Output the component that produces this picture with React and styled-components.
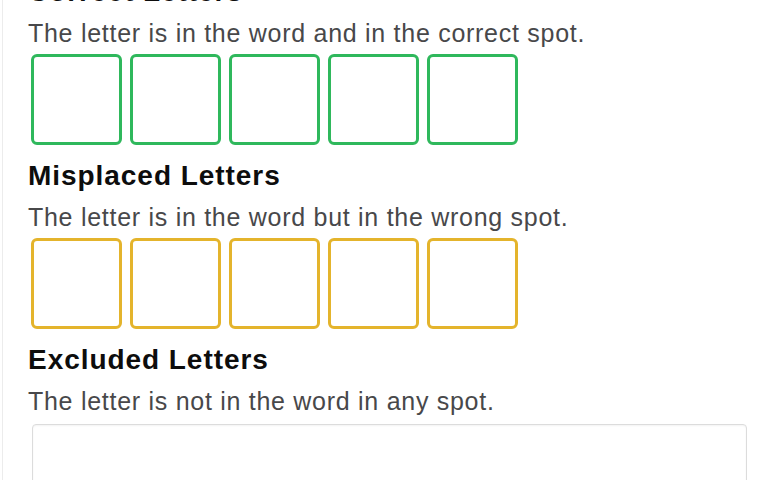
import React from "react";
import styled, { createGlobalStyle } from "styled-components";

const Global = createGlobalStyle`
  html, body { margin: 0; padding: 0; background: #ffffff; overflow: hidden; }
  body { font-family: "Liberation Sans", Arial, sans-serif; }
`;

const Page = styled.div`
  margin-top: -24px;
  margin-left: 2px;
  border-left: 1px solid #ececec;
  padding-left: 25px;
  min-height: 520px;
`;

const Section = styled.section`
  display: flex;
  flex-direction: column;
  margin-bottom: 15px;
`;

const Heading = styled.h2`
  margin: 0;
  font-size: 28px;
  line-height: 32px;
  font-weight: 700;
  letter-spacing: 0.95px;
  color: #0d0d0d;
`;

const Description = styled.p`
  margin: 10px 0 0;
  font-size: 25px;
  line-height: 30px;
  letter-spacing: 0.72px;
  color: #48484a;
`;

const BoxRow = styled.div`
  display: flex;
  gap: 8px;
  margin: 6px 0 0 3px;
`;

const LetterBox = styled.div`
  width: 91px;
  height: 91px;
  box-sizing: border-box;
  border: 3px solid ${(p) => p.$color};
  border-radius: 6px;
  background: #ffffff;
`;

const TextInput = styled.div`
  margin: 8px 0 0 4px;
  width: 715px;
  height: 80px;
  box-sizing: border-box;
  border: 1px solid #dcdcdc;
  border-radius: 4px;
  box-shadow: inset 0 1px 2px rgba(0, 0, 0, 0.05);
`;

const GREEN = "#2fb85c";
const YELLOW = "#e4b42c";

function Boxes({ color }) {
  return (
    <BoxRow>
      {[0, 1, 2, 3, 4].map((i) => (
        <LetterBox key={i} $color={color} />
      ))}
    </BoxRow>
  );
}

export default function App() {
  return (
    <>
      <Global />
      <Page>
        <Section>
          <Heading>Correct Letters</Heading>
          <Description>The letter is in the word and in the correct spot.</Description>
          <Boxes color={GREEN} />
        </Section>
        <Section>
          <Heading>Misplaced Letters</Heading>
          <Description>The letter is in the word but in the wrong spot.</Description>
          <Boxes color={YELLOW} />
        </Section>
        <Section>
          <Heading>Excluded Letters</Heading>
          <Description>The letter is not in the word in any spot.</Description>
          <TextInput />
        </Section>
      </Page>
    </>
  );
}
